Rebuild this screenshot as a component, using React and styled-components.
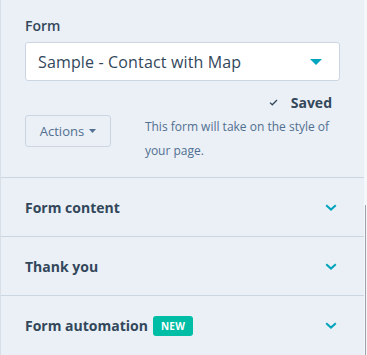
import React from 'react';
import styled, { createGlobalStyle } from 'styled-components';

const GlobalStyle = createGlobalStyle`
  html, body {
    margin: 0;
    padding: 0;
    background: #f5f8fa;
  }
  body {
    font-family: 'Open Sans', 'Liberation Sans', sans-serif;
    color: #33475b;
  }
`;

const sections = [
  { title: 'Form content' },
  { title: 'Thank you' },
  { title: 'Form automation', badge: 'NEW' },
];

export default function App() {
  return (
    <>
      <GlobalStyle />
      <Frame>
        <Panel>
          <Top>
            <Label>Form</Label>
            <Select>
              <span>Sample - Contact with Map</span>
              <Caret viewBox='0 0 12 6'>
                <path d='M0 0h12L6 6z' />
              </Caret>
            </Select>
            <SavedRow>
              <svg width='9' height='7' viewBox='0 0 9 7'>
                <path d='M1 3.6l2.3 2.2L8 1' fill='none' stroke='#33475b' strokeWidth='1.3' />
              </svg>
              <Saved>Saved</Saved>
            </SavedRow>
            <ActionRow>
              <ActionsButton>
                Actions
                <svg width='7' height='4' viewBox='0 0 7 4'>
                  <path d='M0 0h7L3.5 4z' fill='#516f90' />
                </svg>
              </ActionsButton>
              <Help>This form will take on the style of your page.</Help>
            </ActionRow>
          </Top>
          {sections.map(s => (
            <Section key={s.title}>
              <SectionTitle>
                {s.title}
                {s.badge && <Badge>{s.badge}</Badge>}
              </SectionTitle>
              <Chevron viewBox='0 0 12 7'>
                <path d='M1.2 1.2L6 5.6l4.8-4.4' />
              </Chevron>
            </Section>
          ))}
        </Panel>
        <Gutter>
          <Thumb />
        </Gutter>
      </Frame>
    </>
  );
}

const Frame = styled.div`
  display: flex;
  width: 367px;
  height: 355px;
  overflow: hidden;
`;

const Panel = styled.div`
  width: 363px;
  flex-shrink: 0;
  background: #eaf0f6;
  border-left: 1px solid #d6dfe8;
`;

const Gutter = styled.div`
  flex: 1;
  display: flex;
  justify-content: flex-end;
  padding-top: 205px;
`;

const Thumb = styled.div`
  width: 1px;
  height: 150px;
  background: #9aa3ad;
  margin-right: 1px;
`;

const Top = styled.div`
  padding: 16px 24px 0 24px;
  height: 178px;
  box-sizing: border-box;
  border-bottom: 1px solid #cbd6e2;
`;

const Label = styled.div`
  font-size: 14px;
  font-weight: 600;
  line-height: 19px;
  margin-bottom: 7px;
`;

const Select = styled.div`
  display: flex;
  align-items: center;
  justify-content: space-between;
  height: 39px;
  box-sizing: border-box;
  padding: 0 17px 0 12px;
  background: #fff;
  border: 1px solid #cbd6e2;
  border-radius: 3px;
  font-size: 16px;
  letter-spacing: 0.15px;
  color: #33475b;
`;

const Caret = styled.svg`
  width: 12px;
  height: 6px;
  fill: #00a4bd;
`;

const SavedRow = styled.div`
  display: flex;
  justify-content: flex-end;
  align-items: center;
  gap: 13px;
  margin-top: 12px;
  padding-right: 8px;
  height: 18px;
`;

const Saved = styled.span`
  font-size: 14px;
  font-weight: 700;
`;

const ActionRow = styled.div`
  display: flex;
  align-items: flex-start;
  gap: 34px;
  margin-top: 4px;
`;

const ActionsButton = styled.div`
  display: flex;
  align-items: center;
  justify-content: center;
  gap: 5px;
  width: 88px;
  height: 32px;
  box-sizing: border-box;
  border: 1px solid #cbd6e2;
  border-radius: 3px;
  font-size: 13px;
  color: #516f90;
`;

const Help = styled.p`
  margin: 0;
  font-size: 12px;
  line-height: 24px;
  color: #516f90;
  width: 200px;
`;

const Section = styled.div`
  display: flex;
  align-items: center;
  justify-content: space-between;
  height: 59px;
  box-sizing: border-box;
  padding: 0 27px 0 24px;
  border-bottom: 1px solid #cbd6e2;
  &:last-child {
    border-bottom: none;
  }
`;

const SectionTitle = styled.div`
  display: flex;
  align-items: center;
  gap: 5px;
  font-size: 14px;
  font-weight: 700;
  color: #33475b;
`;

const Badge = styled.span`
  display: inline-flex;
  align-items: center;
  height: 20px;
  padding: 0 8px;
  border-radius: 3px;
  background: #00bda5;
  color: #fff;
  font-size: 10px;
  font-weight: 700;
  letter-spacing: 0.3px;
`;

const Chevron = styled.svg`
  width: 12px;
  height: 7px;
  fill: none;
  stroke: #00a4bd;
  stroke-width: 2;
`;
